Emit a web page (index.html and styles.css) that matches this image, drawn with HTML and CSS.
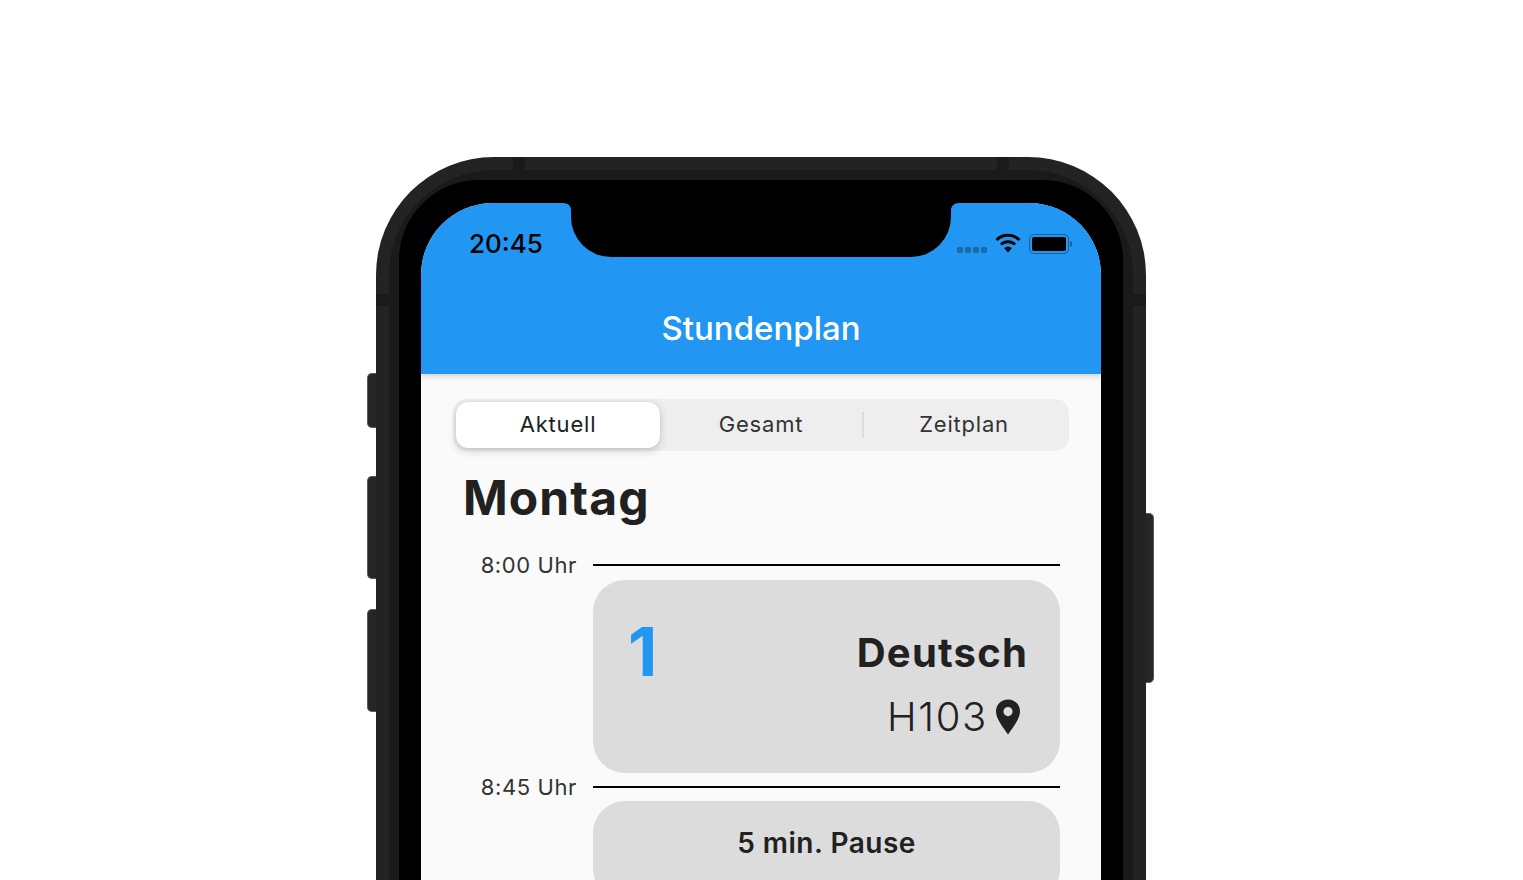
FILE: index.html
```html
<!DOCTYPE html>
<html lang="en">
<head>
    <meta charset="UTF-8">
    <meta name="viewport" content="width=device-width, initial-scale=1.0">
    <title>Stundenplan</title>
    <link rel="stylesheet" href="styles.css">
</head>
<body>
    <div class="phone">
        <div class="side-btn btn-mute"></div>
        <div class="side-btn btn-up"></div>
        <div class="side-btn btn-down"></div>
        <div class="side-btn btn-power"></div>
        <div class="band band-top-l"></div>
        <div class="band band-top-r"></div>
        <div class="band band-left"></div>
        <div class="band band-right"></div>

        <div class="phone-inner">
            <div class="bezel">
                <div class="screen">
                    <svg class="notch" width="396" height="54" viewBox="0 0 396 54">
                        <path d="M0 0Q8 0 8 8V14A40 40 0 0 0 48 54H348A40 40 0 0 0 388 14V8Q388 0 396 0Z" fill="#000"/>
                    </svg>

                    <header class="app-bar">
                        <div class="status-bar">
                            <span class="clock">20:45</span>
                            <div class="status-icons">
                                <div class="signal"><i></i><i></i><i></i><i></i></div>
                                <svg class="wifi" width="26" height="20" viewBox="0 0 26 20">
                                    <path d="M1.5 7A16.5 16.5 0 0 1 24.500 7" fill="none" stroke="#000" stroke-width="3"/>
                                    <path d="M6 11.500A10 10 0 0 1 20 11.500" fill="none" stroke="#000" stroke-width="3"/>
                                    <path d="M9.200 15A6 6 0 0 1 16.800 15L13 19.500Z" fill="#000"/>
                                </svg>
                                <div class="battery"><div class="battery-fill"></div></div>
                                <div class="battery-tip"></div>
                            </div>
                        </div>
                        <h1 class="app-title">Stundenplan</h1>
                    </header>

                    <main class="content">
                        <div class="tabs">
                            <div class="tab tab-active">Aktuell</div>
                            <div class="tab">Gesamt</div>
                            <div class="tab tab-split">Zeitplan</div>
                        </div>

                        <h2 class="day">Montag</h2>

                        <div class="slot">
                            <span class="time">8:00 Uhr</span>
                            <div class="rule"></div>
                        </div>
                        <div class="lesson">
                            <span class="lesson-no">1</span>
                            <div class="lesson-info">
                                <div class="subject">Deutsch</div>
                                <div class="room">
                                    H103
                                    <svg class="pin" width="26" height="36" viewBox="0 0 26 36">
                                        <path fill-rule="evenodd" d="M13 .5C6 .5 1 5.700 1 12.500C1 20 8 28 13 35.500C18 28 25 20 25 12.500C25 5.700 20 .5 13 .5ZM13 8A4.600 4.600 0 1 1 13 17.200A4.600 4.600 0 1 1 13 8Z" fill="#212121"/>
                                    </svg>
                                </div>
                            </div>
                        </div>

                        <div class="slot">
                            <span class="time">8:45 Uhr</span>
                            <div class="rule"></div>
                        </div>
                        <div class="pause">5 min. Pause</div>
                    </main>
                </div>
            </div>
        </div>
    </div>
</body>
</html>
```

FILE: styles.css
```css
html, body {
    margin: 0;
    height: 880px;
    overflow: hidden;
    background: #fff;
}
body {
    font-family: Inter, "Noto Sans", sans-serif;
    color: #212121;
    padding-top: 157px;
    box-sizing: border-box;
}
.phone {
    position: relative;
    width: 770px;
    margin-left: 376px;
    background: #232323;
    border-radius: 118px 118px 0 0;
    padding: 13px 13px 0;
    box-sizing: border-box;
    height: 723px;
}
.phone-inner {
    background: #1a1a1a;
    border-radius: 105px 105px 0 0;
    padding: 10px 10px 0;
    height: 100%;
    box-sizing: border-box;
}
.bezel {
    background: #000;
    border-radius: 80px 80px 0 0;
    padding: 23px 22px 0;
    height: 100%;
    box-sizing: border-box;
}
.screen {
    position: relative;
    background: #fafafa;
    border-radius: 72px 72px 0 0;
    overflow: hidden;
    height: 100%;
}

/* device details */
.side-btn {
    position: absolute;
    left: -9px;
    width: 9px;
    background: #262626;
    border: 1px solid #5a5a5a;
    border-right: none;
    border-radius: 5px 0 0 5px;
    box-sizing: border-box;
}
.btn-mute { top: 216px; height: 55px; }
.btn-up { top: 319px; height: 103px; }
.btn-down { top: 452px; height: 103px; }
.btn-power {
    left: auto;
    right: -8px;
    width: 8px;
    top: 356px;
    height: 170px;
    border: 1px solid #5a5a5a;
    border-left: none;
    border-radius: 0 5px 5px 0;
}
.band {
    position: absolute;
    background: #1a1a1a;
}
.band-top-l { top: 0; left: 137px; width: 12px; height: 13px; }
.band-top-r { top: 0; left: 621px; width: 12px; height: 13px; }
.band-left { top: 137px; left: 0; width: 13px; height: 12px; }
.band-right { top: 137px; right: 0; width: 13px; height: 12px; }

.notch {
    position: absolute;
    top: 0;
    left: 142px;
    z-index: 2;
}

/* app bar */
.app-bar {
    position: relative;
    z-index: 1;
    background: #2196f3;
    height: 171px;
    box-shadow: 0 2px 6px rgba(0, 0, 0, 0.18);
}
.status-bar {
    display: flex;
    justify-content: space-between;
    align-items: center;
    height: 81px;
    padding: 0 29px 0 48px;
}
.clock {
    font-size: 26px;
    font-weight: 500;
    color: #000;
}
.status-icons {
    display: flex;
    align-items: center;
}
.signal {
    display: flex;
    gap: 2px;
    margin: 13px 8px 0 0;
}
.signal i {
    width: 6px;
    height: 6px;
    border-radius: 1.5px;
    background: #1a6cab;
}
.wifi {
    margin: -2px 8px 0 0;
}
.battery {
    width: 40px;
    height: 20px;
    border: 1.500px solid #16619c;
    border-radius: 5px;
    padding: 2px;
    box-sizing: border-box;
}
.battery-fill {
    height: 100%;
    background: #000;
    border-radius: 2px;
}
.battery-tip {
    width: 2px;
    height: 6px;
    margin-left: 1px;
    background: #16619c;
    border-radius: 0 2px 2px 0;
}
.app-title {
    margin: 0;
    padding-top: 20px;
    text-align: center;
    color: #fff;
    font-size: 33px;
    line-height: 48px;
    font-weight: 500;
}

/* content */
.content {
    padding: 25px 32px 0;
}
.tabs {
    display: grid;
    grid-template-columns: 204px 202px 1fr;
    height: 52px;
    padding: 3px;
    box-sizing: border-box;
    background: #eeeeee;
    border-radius: 14px;
}
.tab {
    display: flex;
    align-items: center;
    justify-content: center;
    padding-bottom: 2px;
    box-sizing: border-box;
    font-size: 22px;
    letter-spacing: 0.8px;
    color: #333;
}
.tab-active {
    background: #fff;
    border-radius: 12px;
    color: #212121;
    box-shadow: 0 3px 8px rgba(0, 0, 0, 0.18), 0 0 1px rgba(0, 0, 0, 0.2);
}
.tab-split {
    position: relative;
}
.tab-split::before {
    content: "";
    position: absolute;
    left: 0;
    top: 10px;
    bottom: 10px;
    width: 2px;
    background: #dcdcdc;
}
.day {
    margin: 16px 0 0 10px;
    font-size: 48px;
    line-height: 62px;
    font-weight: 700;
    letter-spacing: 1.1px;
}
.slot {
    display: grid;
    grid-template-columns: 124px 1fr;
    column-gap: 16px;
    align-items: center;
    height: 28px;
    width: 607px;
}
.day + .slot {
    margin-top: 22px;
}
.time {
    text-align: right;
    font-size: 22px;
    letter-spacing: 0.6px;
    color: #333;
}
.rule {
    height: 2px;
    background: #000;
}
.lesson {
    display: flex;
    justify-content: space-between;
    box-sizing: border-box;
    width: 467px;
    height: 193px;
    margin: 1px 0 0 140px;
    padding: 28px 32px 0 35px;
    background: #dcdcdc;
    border-radius: 32px;
}
.lesson-no {
    font-size: 68px;
    line-height: 86px;
    font-weight: 700;
    color: #2196f3;
}
.lesson-info {
    display: flex;
    flex-direction: column;
    align-items: flex-end;
    padding-top: 16px;
}
.subject {
    font-size: 40px;
    line-height: 58px;
    font-weight: 700;
    letter-spacing: 1.2px;
}
.room {
    display: flex;
    align-items: center;
    gap: 7px;
    margin-top: 6px;
    font-size: 40px;
    line-height: 58px;
    font-weight: 300;
    letter-spacing: 1.7px;
    color: #212121;
}
.pin {
    margin-right: 7px;
}
.pause {
    box-sizing: border-box;
    width: 467px;
    height: 100px;
    margin: 0 0 0 140px;
    padding-top: 24px;
    text-align: center;
    background: #dcdcdc;
    border-radius: 32px;
    font-size: 28px;
    line-height: 36px;
    font-weight: 600;
    letter-spacing: 0.5px;
}
```
